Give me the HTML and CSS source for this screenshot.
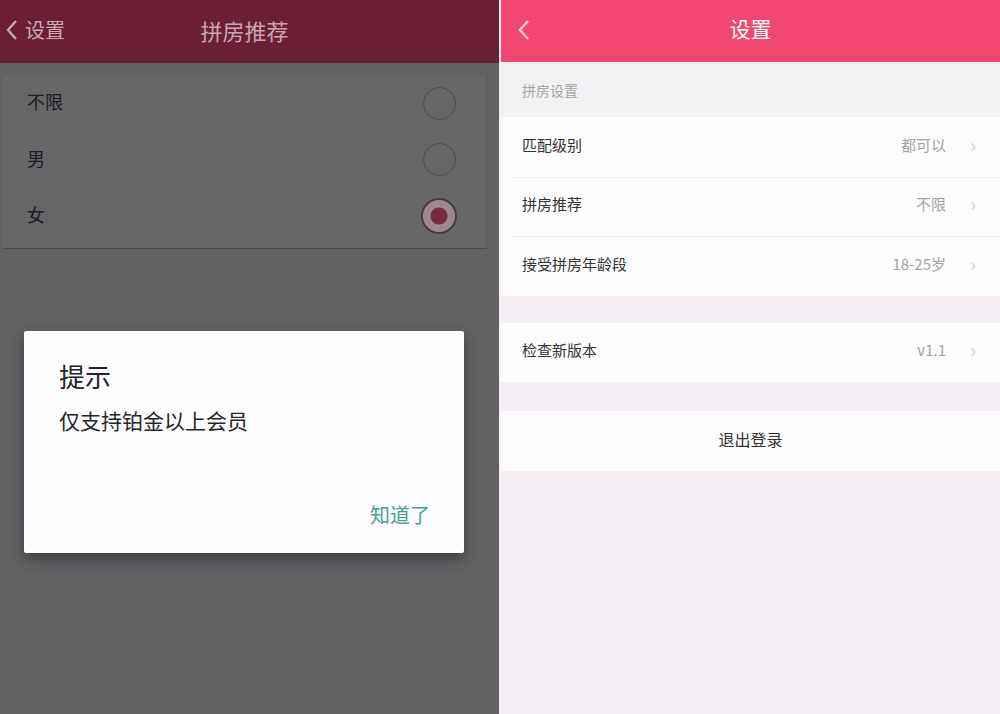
FILE: index.html
```html
<!DOCTYPE html>
<html lang="zh-CN">
<head>
    <meta charset="UTF-8">
    <meta name="viewport" content="width=device-width, initial-scale=1.0">
    <title>设置</title>
    <link rel="stylesheet" href="styles.css">
</head>
<body>
    <div class="screens">
        <!-- Left screen: recommendation picker with modal -->
        <section class="screen screen-dim">
            <header class="bar bar-dim">
                <span class="bar-back">
                    <svg width="14" height="22" viewBox="0 0 14 22"><path d="M11 2 L3 11 L11 20" fill="none" stroke="currentColor" stroke-width="2.4"/></svg>
                    设置
                </span>
                <span class="bar-title">拼房推荐</span>
            </header>

            <div class="options">
                <div class="option">
                    <span>不限</span>
                    <span class="radio"></span>
                </div>
                <div class="option">
                    <span>男</span>
                    <span class="radio"></span>
                </div>
                <div class="option">
                    <span>女</span>
                    <span class="radio checked"></span>
                </div>
            </div>

            <div class="dialog">
                <h2 class="dialog-title">提示</h2>
                <p class="dialog-text">仅支持铂金以上会员</p>
                <div class="dialog-actions">
                    <span class="dialog-btn">知道了</span>
                </div>
            </div>
        </section>

        <!-- Right screen: settings -->
        <section class="screen screen-settings">
            <header class="bar bar-pink">
                <span class="bar-back">
                    <svg width="14" height="22" viewBox="0 0 14 22"><path d="M11 2 L3 11 L11 20" fill="none" stroke="currentColor" stroke-width="2.4"/></svg>
                </span>
                <span class="bar-title">设置</span>
            </header>

            <div class="group-label">拼房设置</div>
            <div class="group">
                <div class="row">
                    <span class="row-label">匹配级别</span>
                    <span class="row-value">都可以</span>
                    <span class="row-arrow">›</span>
                </div>
                <div class="row">
                    <span class="row-label">拼房推荐</span>
                    <span class="row-value">不限</span>
                    <span class="row-arrow">›</span>
                </div>
                <div class="row">
                    <span class="row-label">接受拼房年龄段</span>
                    <span class="row-value">18-25岁</span>
                    <span class="row-arrow">›</span>
                </div>
            </div>

            <div class="group spaced">
                <div class="row">
                    <span class="row-label">检查新版本</span>
                    <span class="row-value">v1.1</span>
                    <span class="row-arrow">›</span>
                </div>
            </div>

            <div class="group spaced">
                <div class="row row-center">退出登录</div>
            </div>
        </section>
    </div>
</body>
</html>
```

FILE: styles.css
```css
* {
    margin: 0;
    padding: 0;
    box-sizing: border-box;
}

body {
    font-family: "Noto Sans CJK SC", "Noto Sans", sans-serif;
    background: #f5eff5;
    width: 1000px;
    height: 714px;
    overflow: hidden;
}

.screens {
    display: flex;
    height: 714px;
    gap: 2px;
    background: #f4f1f4;
}

.screen {
    position: relative;
    width: 499px;
    height: 100%;
}

.bar {
    height: 63px;
    display: flex;
    align-items: center;
    justify-content: center;
    position: relative;
    padding-bottom: 4px;
}

.bar-back {
    position: absolute;
    left: 5px;
    top: 0;
    height: 100%;
    display: flex;
    align-items: center;
    gap: 6px;
    padding-bottom: 4px;
}

.bar-title {
    font-size: 22px;
}

/* ---- dimmed left screen ---- */
.screen-dim {
    background: #636164;
}

.bar-dim {
    background: #6b1f35;
    color: #c8a6b1;
}

.bar-dim .bar-back {
    font-size: 20px;
    color: #c9a9b4;
}

.bar-dim .bar-title {
    margin-left: -10px;
}

.options {
    margin: 12px 12px 0 3px;
    background: #676669;
    border-right: 1px solid #58575a;
    border-bottom: 1px solid #4a494c;
    padding: 0 0 3px;
}

.option {
    height: 56.5px;
    display: flex;
    align-items: center;
    justify-content: space-between;
    padding: 0 30px 0 24px;
    font-size: 18px;
    color: #1c1b1d;
}

.option > span:first-child {
    padding-bottom: 4px;
}

.radio {
    width: 33px;
    height: 33px;
    border-radius: 50%;
    border: 1.5px solid #4d4c50;
}

.radio.checked {
    width: 36px;
    height: 36px;
    margin-right: -1px;
    border: 2px solid #4a3a42;
    background: radial-gradient(circle, #7c2a3e 0 8px, #9c8890 9px);
}

.dialog {
    position: absolute;
    left: 24px;
    top: 331px;
    width: 440px;
    height: 222px;
    background: #fdfcfe;
    border-radius: 2px;
    box-shadow: 0 6px 14px rgba(20, 18, 22, 0.45);
    padding: 28px 34px 0 35px;
    display: flex;
    flex-direction: column;
}

.dialog-title {
    font-size: 26px;
    font-weight: 400;
    color: #222;
    line-height: 34px;
}

.dialog-text {
    margin-top: 13px;
    font-size: 21px;
    color: #262626;
    line-height: 28px;
}

.dialog-actions {
    margin-top: auto;
    padding-bottom: 24px;
    display: flex;
    justify-content: flex-end;
}

.dialog-btn {
    font-size: 20px;
    line-height: 28px;
    color: #47a090;
}

/* ---- settings screen ---- */
.screen-settings {
    background: #f5eff5;
}

.bar-pink {
    height: 62px;
    background: #f2476f;
    color: #fff;
    padding-bottom: 6px;
}

.bar-pink .bar-back {
    left: 16px;
    color: #f8cfda;
    padding-bottom: 2px;
}

.bar-pink .bar-title {
    font-size: 21px;
}

.group-label {
    height: 55px;
    background: #f3f1f3;
    padding-left: 21px;
    display: flex;
    align-items: center;
    font-size: 14px;
    color: #a7a4a7;
}

.group {
    background: #fefdfe;
}

.group.spaced {
    margin-top: 27px;
}

.screen-settings .group.spaced:last-child {
    margin-top: 29px;
}

.row {
    height: 59.5px;
    display: flex;
    align-items: center;
    padding: 0 24px 5px 21px;
    position: relative;
}

.row + .row::before {
    content: "";
    position: absolute;
    left: 12px;
    right: 0;
    top: 0;
    height: 1px;
    background: #f0ecf0;
}

.row-label {
    flex: 1;
    font-size: 15px;
    color: #333;
}

.row-value {
    font-size: 15px;
    color: #a5a2a5;
}

.row-arrow {
    width: 30px;
    text-align: right;
    font-size: 20px;
    color: #d4d0d4;
}

.row-center {
    justify-content: center;
    font-size: 16px;
    color: #333;
    padding: 0 0 4px;
}
```
